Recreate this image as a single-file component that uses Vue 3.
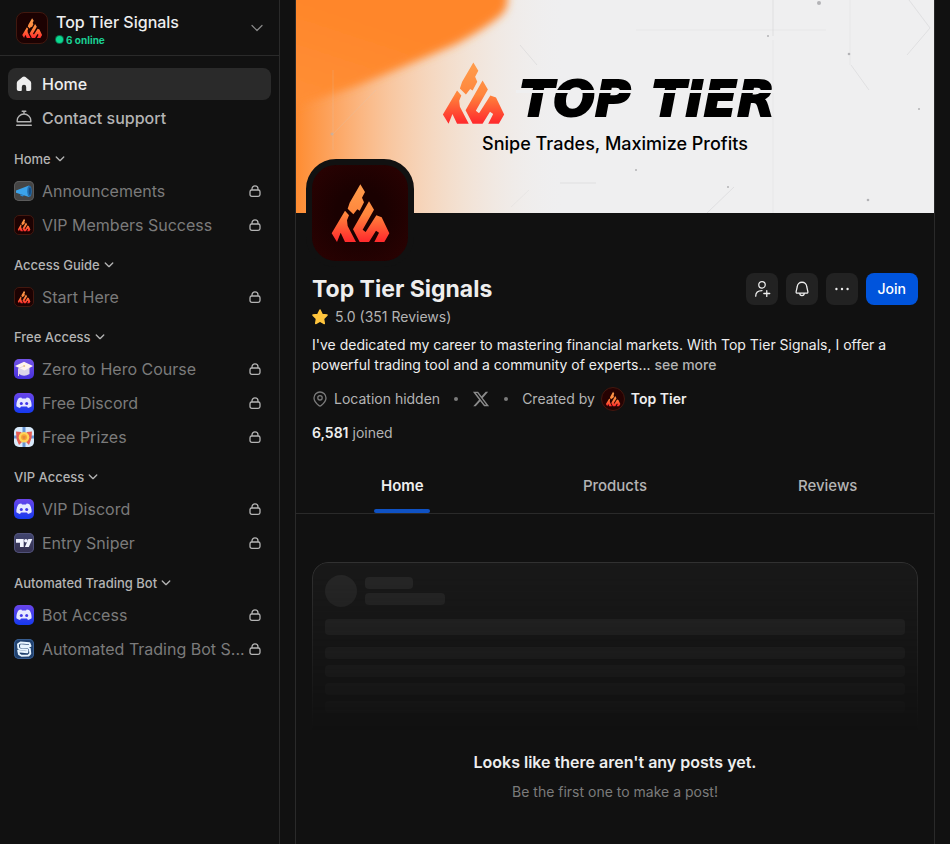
<template>
  <svg class="defs" aria-hidden="true">
    <defs>
      <linearGradient id="flame" x1="0" y1="0" x2="0" y2="192" gradientUnits="userSpaceOnUse">
        <stop offset="0.1" stop-color="#ff9a4a" />
        <stop offset="0.5" stop-color="#ff853c" />
        <stop offset="0.9" stop-color="#ff2d2d" />
      </linearGradient>
      <symbol id="logo" viewBox="-3 -5 192 192">
        <path
          fill="url(#flame)"
          d="M94 5 108 28 99 45 105 59 92 84 85 80 73 95 56 78 62 60ZM48 84 60 98 54 113 56 130 81 178H48L35 150 24 178 8 152ZM120 56 135 81 101 141 110 148 142 98 158 104 181 152 166 178H136L150 150 141 144 120 178H92L72 140Z"
        />
      </symbol>
    </defs>
  </svg>

  <div class="layout">
    <aside class="sidebar">
      <button class="community" type="button">
        <span class="app-icon large fire"><svg><use href="#logo" /></svg></span>
        <span class="community-text">
          <span class="community-name">Top Tier Signals</span>
          <span class="online"><i></i>6 online</span>
        </span>
        <svg class="chevron" viewBox="0 0 12 12"><path d="M1 3.5 6 8.5 11 3.5" /></svg>
      </button>

      <nav class="nav">
        <div class="main-links">
          <a class="link active" href="#">
            <svg class="home-icon" viewBox="0 0 20 20">
              <path d="M10 2.6c.6 0 1 .2 1.5.5l4.500 3.600c.8.6 1.200 1.300 1.200 2.300v6c0 1.200-.8 2-2 2h-2.200c-.5 0-.8-.3-.8-.8V13a2.200 2.200 0 0 0-4.400 0v3.200c0 .5-.3.8-.8.8H4.800c-1.200 0-2-.8-2-2V9c0-1 .4-1.700 1.200-2.300l4.500-3.600c.5-.3.9-.5 1.500-.5Z" />
            </svg>
            <span class="link-text">Home</span>
          </a>
          <a class="link support" href="#">
            <svg class="line-icon" viewBox="0 0 20 20">
              <path d="M8.200 3.200h3.600M10 3.200v2.600M3.200 13.700V12.500a6.800 6.500 0 0 1 13.600 0v1.200ZM2.700 17.200h14.600" />
            </svg>
            <span class="link-text">Contact support</span>
          </a>
        </div>

        <section v-for="group in groups" :key="group.title" class="group">
          <button class="group-title" type="button">
            {{ group.title }}
            <svg class="chevron small" viewBox="0 0 12 12"><path d="M1.500 3.500 6 8 10.500 3.500" /></svg>
          </button>
          <a v-for="item in group.items" :key="item.name" class="link locked" href="#">
            <span class="app-icon" :class="item.icon">
              <svg v-if="item.icon === 'fire'"><use href="#logo" /></svg>
              <svg v-else-if="item.icon === 'discord'" viewBox="0 0 20 20">
                <path fill="#e6e8ff" d="M7.300 4.600 8 5.500h4l.7-.9c1.200.1 2.200.5 3.200 1.100 1.200 2.200 1.900 4.700 1.700 7.500-1 .9-2.200 1.500-3.600 1.800l-1-1.500H7l-1 1.500c-1.400-.3-2.600-.9-3.600-1.800-.2-2.800.5-5.300 1.700-7.500 1-.6 2-1 3.200-1.100Z" />
                <circle cx="7.300" cy="10.400" r="1.500" fill="#4138e8" />
                <circle cx="12.700" cy="10.400" r="1.500" fill="#4138e8" />
              </svg>
              <svg v-else-if="item.icon === 'horn'" viewBox="0 0 20 20">
                <path fill="#3ba3ea" d="M2 9.500 15 4.500V16L2 11.800Z" />
                <path fill="#2c86cf" d="M6 13.200 10 14.300 9 15.500 6.500 14.800Z" />
                <ellipse cx="15.500" cy="10.200" rx="2.300" ry="5.700" fill="#256fae" />
                <ellipse cx="15.900" cy="10.200" rx="1.100" ry="3.700" fill="#174e84" />
              </svg>
              <svg v-else-if="item.icon === 'course'" viewBox="0 0 20 20">
                <path fill="#dcd4ea" d="M5 8.500V15Q10 18.500 15.500 15V8.500Z" />
                <path fill="#fff4ee" d="M1 7 10 2.800 19 7 10.500 11.600Z" />
                <path fill="none" stroke="#e9d6df" d="M10 7 4.500 9.500V17" />
                <circle cx="10.200" cy="7" r="1" fill="#e9c487" />
              </svg>
              <svg v-else-if="item.icon === 'prize'" viewBox="0 0 20 20">
                <path fill="#6995d3" d="M8.500 0h3v20h-3zM0 8.500h20v3H0z" />
                <path fill="#e75e55" d="M2 4.500 7 5 10 9 13 5 18 4.500 17.500 11 15 18 11 14H9L5 18 2.500 12Z" />
                <circle cx="10" cy="10.200" r="5.300" fill="#ffd458" />
                <circle cx="10" cy="10.200" r="3" fill="#f4a833" />
                <path fill="#e7873c" d="M8.500 9h3v2L10 12.500 8.500 11Z" />
              </svg>
              <svg v-else-if="item.icon === 'sniper'" viewBox="0 0 20 20">
                <path fill="#f2f4ff" d="M2 6h7.700v8H6V9.700H2Z" />
                <circle cx="11.900" cy="7.800" r="1.800" fill="#f2f4ff" />
                <path fill="#f2f4ff" d="M14.300 6h4l-3.500 8h-3.900Z" />
              </svg>
              <svg v-else viewBox="0 0 20 20">
                <path fill="none" stroke="#e8f5ff" stroke-width="1.900" stroke-linejoin="round" d="M16.500 7 15.500 4.200 6.500 3.500 4 5.200 4.300 9 6 10.300 13.500 11 13.300 13.200 6 12.500 4.200 11.500 5 15.200 7.500 16.800 14.500 16.500 16.300 14.500 15.800 9.800 14 8.500 7 8V6.300Z" />
              </svg>
            </span>
            <span class="link-text">{{ item.name }}</span>
            <svg class="lock" viewBox="0 0 12 12">
              <rect x="1" y="5" width="10" height="6.300" rx="1.800" />
              <path d="M3 5V3.800a3 3 0 0 1 6 0V5" />
            </svg>
          </a>
        </section>
      </nav>
    </aside>

    <main class="content">
      <svg class="banner" viewBox="0 0 638 213" preserveAspectRatio="xMidYMid slice">
        <defs>
          <linearGradient id="glow">
            <stop offset="0" stop-color="#ff8c31" />
            <stop offset="0.15" stop-color="#ff9a4c" stop-opacity="0.85" />
            <stop offset="0.35" stop-color="#ffac6b" stop-opacity="0.6" />
            <stop offset="0.6" stop-color="#fbc597" stop-opacity="0.35" />
            <stop offset="1" stop-color="#efeff0" stop-opacity="0" />
          </linearGradient>
          <linearGradient id="blob" x1="0" y1="1" x2="0.4" y2="0.3">
            <stop offset="0" stop-color="#ff9038" />
            <stop offset="1" stop-color="#ff862a" />
          </linearGradient>
          <filter id="soft" x="-20%" y="-20%" width="140%" height="140%">
            <feGaussianBlur stdDeviation="4" />
          </filter>
        </defs>
        <rect width="638" height="213" fill="#efeff0" />
        <rect width="270" height="213" fill="url(#glow)" />
        <path filter="url(#soft)" fill="url(#blob)" d="M-20-20H208Q217 6 204 16 190 28 160 44 100 70 60 86 20 100-20 112Z" />
        <g fill="none" stroke="#c9c9cc" stroke-width="0.700">
          <path d="M224 45 241 65M477 0V36M613 0 634 28 611 55M411 213 438 187M264 183H300M555 65 573 90" opacity="0.6" />
          <path d="M477 40V213M340 30H530M36 135 80 90M37 70V150M554 0V65M215 207 233 190" opacity="0.3" />
        </g>
        <g fill="#b3b3b6">
          <circle cx="523" cy="3" r="2" />
          <circle cx="553" cy="54" r="1.300" />
          <circle cx="472" cy="36" r="1" />
          <circle cx="623" cy="109" r="1" />
          <circle cx="572" cy="200" r="1.300" />
          <circle cx="340" cy="170" r="1" />
          <circle cx="432" cy="187" r="1" />
          <circle cx="36" cy="134" r="1.500" opacity="0.6" />
        </g>
        <use href="#logo" x="143" y="59" width="68" height="68" />
        <text class="wordmark" y="116"><tspan x="224">TOP </tspan><tspan x="356">TIER</tspan></text>
        <rect x="220" y="90" width="276" height="3" fill="#efeff0" />
        <text class="tagline" x="319" y="150" text-anchor="middle">Snipe Trades, Maximize Profits</text>
      </svg>

      <section class="profile">
        <div class="avatar"><svg><use href="#logo" /></svg></div>
        <div class="title-row">
          <h1>Top Tier Signals</h1>
          <div class="actions">
            <button class="square" type="button" aria-label="Add member">
              <svg class="line-icon" viewBox="0 0 20 20">
                <circle cx="10" cy="5.300" r="3.600" />
                <path d="M3 18C3 14.200 5.700 11.700 10 11.700M15.300 11.700v6.600M12 15h6.600" />
              </svg>
            </button>
            <button class="square" type="button" aria-label="Notifications">
              <svg class="line-icon" viewBox="0 0 20 20">
                <path d="M10 2.500a5.300 5.300 0 0 0-5.300 5L3.500 13c-.2 1 .3 1.700 1.300 1.700h10.400c1 0 1.500-.7 1.300-1.700l-1.200-5.500A5.300 5.300 0 0 0 10 2.500ZM7.500 14.800a2.500 2.500 0 0 0 5 0" />
              </svg>
            </button>
            <button class="square" type="button" aria-label="More">
              <svg viewBox="0 0 20 20" fill="#eee">
                <circle cx="3.800" cy="10" r="1.300" />
                <circle cx="10" cy="10" r="1.300" />
                <circle cx="16.200" cy="10" r="1.300" />
              </svg>
            </button>
            <button class="join" type="button">Join</button>
          </div>
        </div>

        <div class="rating">
          <svg viewBox="0 0 16 16">
            <path d="M8 1 10.100 5.400 15 6.100 11.500 9.600 12.300 14.500 8 12.200 3.700 14.500 4.500 9.600 1 6.100 5.900 5.400Z" />
          </svg>
          5.0 (351 Reviews)
        </div>

        <p class="about">
          I've dedicated my career to mastering financial markets. With Top Tier Signals, I offer a powerful trading tool and a community of experts... <a href="#">see more</a>
        </p>

        <div class="meta">
          <span class="place">
            <svg class="pin" viewBox="0 0 16 16">
              <path d="M8 1a6 6 0 0 0-6 6c0 3.500 3 6 4.800 7.500.8.700 1.600.7 2.400 0C11 13 14 10.500 14 7a6 6 0 0 0-6-6Z" />
              <circle cx="8" cy="6.800" r="2.200" />
            </svg>
            Location hidden
          </span>
          <i class="dot"></i>
          <a href="#" aria-label="X">
            <svg class="x-icon" viewBox="0 0 24 24">
              <path d="M18.240 2.250h3.310l-7.230 8.260 8.500 11.240h-6.660l-5.210-6.820-5.970 6.820H1.680l7.730-8.840L1.250 2.250h6.830l4.710 6.230Zm-1.160 17.520h1.830L7.080 4.130H5.120Z" />
            </svg>
          </a>
          <i class="dot"></i>
          <span class="creator">
            Created by
            <span class="creator-icon"><svg><use href="#logo" /></svg></span>
            <strong>Top Tier</strong>
          </span>
        </div>

        <p class="joined"><strong>6,581</strong> joined</p>
      </section>

      <nav class="tabs">
        <a
          v-for="tab in tabs"
          :key="tab"
          href="#"
          :class="{ current: tab === activeTab }"
          @click.prevent="activeTab = tab"
        >{{ tab }}</a>
      </nav>

      <section class="feed">
        <div class="skeleton">
          <div class="skeleton-head">
            <div class="circle"></div>
            <div class="names">
              <div class="bar short"></div>
              <div class="bar medium"></div>
            </div>
          </div>
          <div class="bar thick"></div>
          <div v-for="n in 4" :key="n" class="bar line"></div>
        </div>
        <h2>Looks like there aren't any posts yet.</h2>
        <p>Be the first one to make a post!</p>
      </section>
    </main>
  </div>
</template>

<script setup>
import { ref } from 'vue'

const tabs = ['Home', 'Products', 'Reviews']
const activeTab = ref('Home')

const groups = [
  {
    title: 'Home',
    items: [
      { name: 'Announcements', icon: 'horn' },
      { name: 'VIP Members Success', icon: 'fire' }
    ]
  },
  {
    title: 'Access Guide',
    items: [{ name: 'Start Here', icon: 'fire' }]
  },
  {
    title: 'Free Access',
    items: [
      { name: 'Zero to Hero Course', icon: 'course' },
      { name: 'Free Discord', icon: 'discord' },
      { name: 'Free Prizes', icon: 'prize' }
    ]
  },
  {
    title: 'VIP Access',
    items: [
      { name: 'VIP Discord', icon: 'discord' },
      { name: 'Entry Sniper', icon: 'sniper' }
    ]
  },
  {
    title: 'Automated Trading Bot',
    items: [
      { name: 'Bot Access', icon: 'discord' },
      { name: 'Automated Trading Bot S...', icon: 'bot' }
    ]
  }
]
</script>

<style>
body {
  background: #111;
}
</style>

<style scoped>
.defs {
  position: absolute;
  width: 0;
  height: 0;
}

.layout {
  display: flex;
  min-height: 100vh;
  background: #111;
  color: #eee;
  font-family: Inter, "Liberation Sans", sans-serif;
  font-size: 14px;
  line-height: 20px;
}

.layout * {
  box-sizing: border-box;
}

button {
  padding: 0;
  border: 0;
  background: none;
  color: inherit;
  font: inherit;
  cursor: pointer;
}

a {
  color: inherit;
  text-decoration: none;
}

h1, h2, p {
  margin: 0;
}

svg {
  display: block;
  flex: none;
}

/* Sidebar */
.sidebar {
  flex: none;
  width: 280px;
  border-right: 1px solid #2a2a2a;
}

.community {
  display: flex;
  align-items: center;
  gap: 8px;
  width: 100%;
  height: 56px;
  padding: 0 16px;
  border-bottom: 1px solid #2a2a2a;
  text-align: left;
}

.community-text {
  flex: 1;
  display: flex;
  flex-direction: column;
}

.community-name {
  font-size: 16px;
  font-weight: 500;
  line-height: 24px;
}

.online {
  display: flex;
  align-items: center;
  gap: 3px;
  color: #1bd093;
  font-size: 10px;
  font-weight: 700;
  line-height: 12px;
}

.online i {
  width: 7px;
  height: 7px;
  border-radius: 50%;
  background: #0bd88f;
  box-shadow: 0 0 0 1px #0a6b4a;
}

.chevron {
  width: 12px;
  height: 12px;
  fill: none;
  stroke: #8a8a8a;
  stroke-width: 1.2;
  stroke-linecap: round;
  stroke-linejoin: round;
}

.chevron.small {
  width: 10px;
  height: 10px;
  stroke: #b4b4b4;
  stroke-width: 1.6;
}

.nav {
  padding: 12px 8px;
}

.main-links {
  margin-bottom: 13px;
}

.link {
  display: flex;
  align-items: center;
  height: 32px;
  margin-bottom: 2px;
  padding: 0 10px 0 6px;
  border-radius: 8px;
  color: #7b7b7b;
  font-size: 16px;
}

.link:last-child {
  margin-bottom: 0;
}

.link.active {
  background: #2a2a2a;
  color: #eee;
  font-weight: 500;
}

.link.support {
  color: #b4b4b4;
  font-weight: 500;
}

.link-text {
  flex: 1;
  min-width: 0;
  margin-left: 8px;
  overflow: hidden;
  white-space: nowrap;
  text-overflow: ellipsis;
}

.home-icon,
.line-icon {
  width: 20px;
  height: 20px;
}

.home-icon {
  fill: #eee;
}

.line-icon {
  fill: none;
  stroke: currentColor;
  stroke-width: 1.4;
  stroke-linecap: round;
  stroke-linejoin: round;
}

.group {
  margin-bottom: 12px;
}

.group-title {
  display: flex;
  align-items: center;
  gap: 4px;
  height: 24px;
  margin-bottom: 4px;
  padding: 0 6px;
  color: #b4b4b4;
  font-size: 13px;
  font-weight: 500;
}

.lock {
  width: 12px;
  height: 12px;
  fill: none;
  stroke: #b4b4b4;
  stroke-width: 1.3;
}

.app-icon {
  display: flex;
  flex: none;
  align-items: center;
  justify-content: center;
  width: 20px;
  height: 20px;
  border-radius: 5px;
  overflow: hidden;
}

.app-icon svg {
  width: 20px;
  height: 20px;
}

.app-icon.fire {
  border: 1px solid #42180f;
  background: #1c0202;
}

.app-icon.fire svg {
  width: 14px;
  height: 14px;
}

.app-icon.large {
  width: 32px;
  height: 32px;
  border-radius: 8px;
}

.app-icon.large svg {
  width: 22px;
  height: 22px;
}

.app-icon.horn {
  background: #454545;
  box-shadow: inset 0 0 0 1px #5b5b5b;
}

.app-icon.course {
  background: linear-gradient(#7354e6, #4730dc);
}

.app-icon.discord {
  background: linear-gradient(#6a45e9, #1539ef);
}

.app-icon.prize {
  background: #d9eafb;
}

.app-icon.sniper {
  background: linear-gradient(#414670, #35304f);
  box-shadow: inset 0 0 0 1px #50527a;
}

.app-icon.bot {
  background: #20416f;
  box-shadow: inset 0 0 0 1px #385e91;
}

/* Main column */
.content {
  flex: 1;
  min-width: 0;
  margin: 0 15px;
  border: solid #2a2a2a;
  border-width: 0 1px;
}

.banner {
  width: 100%;
  height: auto;
}

.wordmark {
  fill: #000;
  stroke: #000;
  stroke-width: 2;
  font-family: "DejaVu Sans", sans-serif;
  font-size: 49px;
  font-style: italic;
  font-weight: 700;
}

.tagline {
  font-size: 18px;
  font-weight: 500;
}

.profile {
  padding: 0 16px 15px;
}

.avatar {
  position: relative;
  display: flex;
  align-items: center;
  justify-content: center;
  width: 108px;
  height: 108px;
  margin: -54px 0 6px -6px;
  border: 6px solid #111;
  border-radius: 30px;
  background: radial-gradient(#1a0101 35%, #2c0202);
}

.avatar svg {
  width: 64px;
  height: 64px;
}

.title-row {
  display: flex;
  align-items: center;
  justify-content: space-between;
}

h1 {
  font-size: 23px;
  font-weight: 700;
  line-height: 32px;
}

.actions {
  display: flex;
  gap: 8px;
}

.square {
  display: flex;
  align-items: center;
  justify-content: center;
  width: 32px;
  height: 32px;
  border-radius: 8px;
  background: #222;
}

.square svg {
  width: 18px;
  height: 18px;
}

.join {
  height: 32px;
  padding: 0 12px;
  border-radius: 8px;
  background: #0054dc;
  color: #fff;
  font-weight: 500;
}

.rating {
  display: flex;
  align-items: center;
  gap: 7px;
  margin: 2px 0 8px;
  color: #b4b4b4;
}

.rating svg {
  width: 16px;
  height: 16px;
  fill: #ffc53d;
  stroke: #ffc53d;
  stroke-width: 1.5;
  stroke-linejoin: round;
}

.about a {
  color: #b4b4b4;
  font-weight: 500;
}

.meta {
  display: flex;
  align-items: center;
  gap: 14px;
  height: 24px;
  margin: 12px 0;
  color: #b4b4b4;
}

.place,
.creator {
  display: flex;
  align-items: center;
  gap: 6px;
}

.pin {
  width: 16px;
  height: 16px;
  fill: none;
  stroke: #7b7b7b;
  stroke-width: 1.3;
}

.dot {
  width: 4px;
  height: 4px;
  border-radius: 50%;
  background: #7b7b7b;
}

.x-icon {
  width: 18px;
  height: 18px;
  fill: #8a8a8a;
}

.creator-icon {
  display: flex;
  align-items: center;
  justify-content: center;
  width: 24px;
  height: 24px;
  border: 1px solid #42180f;
  border-radius: 50%;
  background: #260202;
}

.creator-icon svg {
  width: 16px;
  height: 16px;
}

strong {
  color: #eee;
  font-weight: 600;
}

.joined {
  color: #b4b4b4;
}

.tabs {
  display: grid;
  grid-template-columns: repeat(3, 1fr);
  height: 56px;
  border-bottom: 1px solid #2a2a2a;
}

.tabs a {
  position: relative;
  display: flex;
  align-items: center;
  justify-content: center;
  color: #b4b4b4;
  font-size: 15px;
  font-weight: 500;
}

.tabs a.current {
  color: #eee;
  font-weight: 600;
}

.tabs a.current::after {
  content: '';
  position: absolute;
  bottom: 0;
  width: 56px;
  height: 4px;
  border-radius: 2px;
  background: #0f52c4;
}

/* Empty feed */
.feed {
  padding: 48px 16px 40px;
  text-align: center;
}

.skeleton {
  height: 168px;
  padding: 12px;
  border: 1px solid #313131;
  border-bottom: 0;
  border-radius: 16px 16px 0 0;
  background: #191919;
  mask-image: linear-gradient(#000, transparent);
}

.skeleton-head {
  display: flex;
  gap: 8px;
  margin-bottom: 12px;
}

.circle {
  width: 32px;
  height: 32px;
  border-radius: 50%;
  background: #282828;
}

.names {
  display: grid;
  gap: 4px;
  padding: 2px 0;
}

.bar {
  height: 12px;
  border-radius: 4px;
  background: #282828;
}

.bar.short {
  width: 48px;
}

.bar.medium {
  width: 80px;
}

.bar.thick {
  height: 16px;
  margin-bottom: 12px;
}

.bar.line {
  margin-bottom: 6px;
}

.feed h2 {
  margin: 20px 0 8px;
  font-size: 16px;
  font-weight: 600;
  line-height: 24px;
}

.feed p {
  color: #7b7b7b;
}
</style>
